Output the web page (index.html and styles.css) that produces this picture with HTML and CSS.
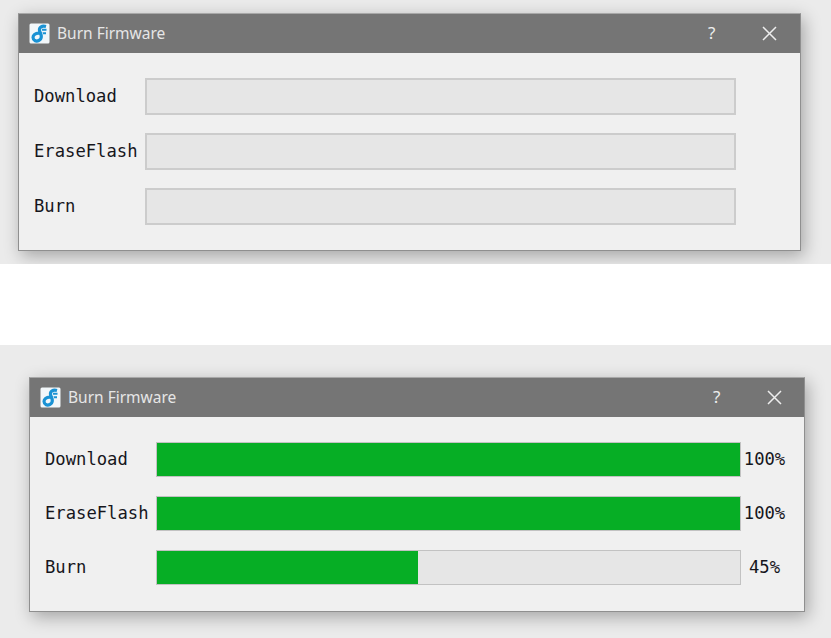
FILE: index.html
```html
<!DOCTYPE html>
<html lang="en">
<head>
<meta charset="utf-8">
<title>Burn Firmware</title>
<link rel="stylesheet" href="styles.css">
</head>
<body>
<section class="panel panel-idle">
  <div class="window window-idle">
    <header class="titlebar">
      <svg class="app-icon" viewBox="0 0 21 21"><rect x="0.5" y="0.5" width="20" height="20" rx="1.500" fill="#f2f7fa"/><path d="M17 3.500C13 2.500 10 4 10.500 7.500 10.800 9.500 12.500 11 12.300 14 12 17.500 8 18.800 5.800 17.500 3.500 16 3.500 13 5.500 11.500 7.500 10 10.500 10 13 11" fill="none" stroke="#1a92d4" stroke-width="3.200"/><circle cx="8" cy="14.500" r="1.200" fill="#f2f7fa"/><path d="M13 6.800h4.500M14 10.200h3" stroke="#1a92d4" stroke-width="2"/></svg>
      <span class="title">Burn Firmware</span>
      <span class="help">?</span>
      <svg class="close" viewBox="0 0 15 15"><path d="M1 1l13 13M14 1L1 14" stroke="#eeeeee" stroke-width="1.500" fill="none"/></svg>
    </header>
    <div class="body">
      <div class="row"><span class="label">Download</span><div class="bar"></div></div>
      <div class="row"><span class="label">EraseFlash</span><div class="bar"></div></div>
      <div class="row"><span class="label">Burn</span><div class="bar"></div></div>
    </div>
  </div>
</section>
<div class="gap"></div>
<section class="panel panel-active">
  <div class="window window-active">
    <header class="titlebar">
      <svg class="app-icon" viewBox="0 0 21 21"><rect x="0.5" y="0.5" width="20" height="20" rx="1.500" fill="#f2f7fa"/><path d="M17 3.500C13 2.500 10 4 10.500 7.500 10.800 9.500 12.500 11 12.300 14 12 17.500 8 18.800 5.800 17.500 3.500 16 3.500 13 5.500 11.500 7.500 10 10.500 10 13 11" fill="none" stroke="#1a92d4" stroke-width="3.200"/><circle cx="8" cy="14.500" r="1.200" fill="#f2f7fa"/><path d="M13 6.800h4.500M14 10.200h3" stroke="#1a92d4" stroke-width="2"/></svg>
      <span class="title">Burn Firmware</span>
      <span class="help">?</span>
      <svg class="close" viewBox="0 0 15 15"><path d="M1 1l13 13M14 1L1 14" stroke="#eeeeee" stroke-width="1.500" fill="none"/></svg>
    </header>
    <div class="body">
      <div class="row"><span class="label">Download</span><div class="bar"><div class="fill" style="width:100%"></div></div><span class="pct">100%</span></div>
      <div class="row"><span class="label">EraseFlash</span><div class="bar"><div class="fill" style="width:100%"></div></div><span class="pct">100%</span></div>
      <div class="row"><span class="label">Burn</span><div class="bar"><div class="fill" style="width:44.700%"></div></div><span class="pct">45%</span></div>
    </div>
  </div>
</section>
</body>
</html>
```
FILE: styles.css
```css
* { box-sizing: border-box; }
html, body { margin: 0; padding: 0; background: #fff; overflow: hidden; }
body { width: 831px; height: 638px; font-family: "DejaVu Sans Mono", monospace; }

.panel { background: #ebebeb; overflow: hidden; }
.panel-idle { height: 264px; padding: 13px 0 0 18px; }
.gap { height: 81px; }
.panel-active { height: 293px; padding: 32px 0 0 29px; }

.window {
  background: #f0f0f0;
  border: 1px solid #8f8f8f;
  border-top-color: #a8a8a8;
  box-shadow: 3px 5px 16px rgba(0, 0, 0, 0.3);
}
.window-idle { width: 783px; height: 238px; }
.window-active { width: 776px; height: 235px; }

.titlebar {
  display: flex;
  align-items: center;
  height: 39px;
  background: #757575;
  color: #e6e6e6;
  font-family: "Noto Sans", sans-serif;
}
.app-icon { width: 21px; height: 21px; margin-left: 10px; flex: none; }
.title { margin-left: 7px; font-size: 15.500px; line-height: 39px; height: 39px; flex: 1; }
.help { font-size: 17px; line-height: 38px; height: 39px; color: #eeeeee; }
.window-idle .help { width: 54px; }
.window-active .help { width: 54px; }
.close { width: 15px; height: 15px; flex: none; }
.window-idle .close { margin-right: 23px; }
.window-active .close { margin-right: 22px; }

.body { display: flex; flex-direction: column; }
.window-idle .body { padding: 25px 0 0 15px; gap: 18px; }
.window-active .body { padding: 25px 0 0 15px; gap: 19px; }

.row { display: flex; align-items: center; }
.window-idle .row { height: 37px; }
.window-active .row { height: 35px; }

.label { width: 111px; font-size: 17.200px; line-height: 35px; height: 35px; color: #16161c; flex: none; }
.bar { height: 100%; background: #e6e6e6; border: 2px solid #cccccc; flex: none; }
.window-active .bar { border-width: 1px; border-color: #c2c2c2; }
.window-idle .bar { width: 591px; }
.window-active .bar { width: 585px; }
.fill { height: 100%; background: #06ae25; }
.pct { flex: 1; max-width: 47px; text-align: center; font-size: 17.200px; line-height: 35px; height: 35px; color: #16161c; }
```
